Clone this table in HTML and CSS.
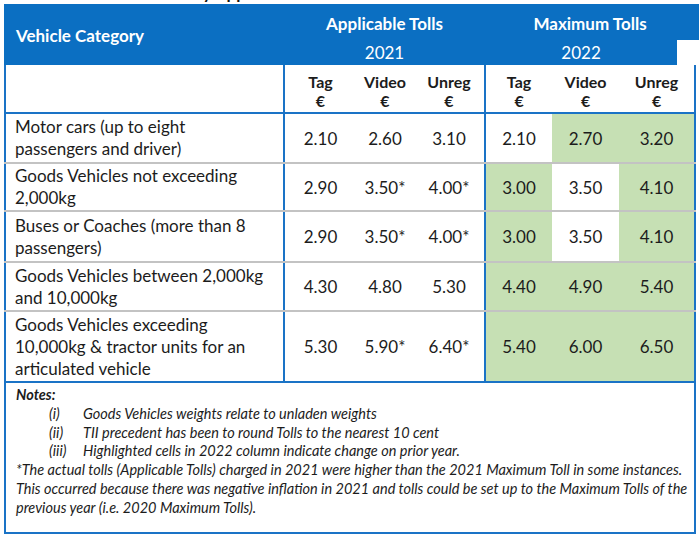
FILE: index.html
```html
<!DOCTYPE html>
<html lang="en">
<head>
<meta charset="utf-8">
<title>Tolls</title>
<link rel="stylesheet" href="styles.css">
</head>
<body>
<div class="title"><span>Toll Summary Applicable and Maximum Tolls</span></div>
<table class="tolls">
  <colgroup>
    <col class="c-cat">
    <col class="c-tag">
    <col class="c-vid">
    <col class="c-unr">
    <col class="c-tag2">
    <col class="c-vid2">
    <col class="c-unr2">
  </colgroup>
  <thead>
    <tr class="h1">
      <th rowspan="2" class="cat-head">Vehicle Category</th>
      <th colspan="3">Applicable Tolls</th>
      <th colspan="3" class="max-head">Maximum Tolls</th>
    </tr>
    <tr class="h2">
      <th colspan="3" class="year">2021</th>
      <th colspan="3" class="year year-max">2022</th>
    </tr>
    <tr class="h3">
      <th class="blank"></th>
      <th class="sep">Tag<br>€</th>
      <th>Video<br>€</th>
      <th>Unreg<br>€</th>
      <th class="sep">Tag<br>€</th>
      <th>Video<br>€</th>
      <th class="last">Unreg<br>€</th>
    </tr>
  </thead>
  <tbody>
    <tr class="r1">
      <td class="cat">Motor cars (up to eight<br>passengers and driver)</td>
      <td class="sep">2.10</td><td>2.60</td><td>3.10</td>
      <td class="sep">2.10</td><td class="hl">2.70</td><td class="hl last">3.20</td>
    </tr>
    <tr class="r2">
      <td class="cat">Goods Vehicles not exceeding<br>2,000kg</td>
      <td class="sep">2.90</td><td>3.50*</td><td>4.00*</td>
      <td class="sep hl">3.00</td><td>3.50</td><td class="hl last">4.10</td>
    </tr>
    <tr class="r3">
      <td class="cat">Buses or Coaches (more than 8<br>passengers)</td>
      <td class="sep">2.90</td><td>3.50*</td><td>4.00*</td>
      <td class="sep hl">3.00</td><td>3.50</td><td class="hl last">4.10</td>
    </tr>
    <tr class="r4">
      <td class="cat">Goods Vehicles between 2,000kg<br>and 10,000kg</td>
      <td class="sep">4.30</td><td>4.80</td><td>5.30</td>
      <td class="sep hl">4.40</td><td class="hl">4.90</td><td class="hl last">5.40</td>
    </tr>
    <tr class="r5">
      <td class="cat">Goods Vehicles exceeding<br>10,000kg &amp; tractor units for an<br>articulated vehicle</td>
      <td class="sep">5.30</td><td>5.90*</td><td>6.40*</td>
      <td class="sep hl">5.40</td><td class="hl">6.00</td><td class="hl last">6.50</td>
    </tr>
  </tbody>
  <tfoot>
    <tr>
      <td colspan="7" class="notes">
        <div class="notes-title">Notes:</div>
        <ol class="notes-list">
          <li><span class="num">(i)</span><span>Goods Vehicles weights relate to unladen weights</span></li>
          <li><span class="num">(ii)</span><span>TII precedent has been to round Tolls to the nearest 10 cent</span></li>
          <li><span class="num">(iii)</span><span>Highlighted cells in 2022 column indicate change on prior year.</span></li>
        </ol>
        <p class="foot">*The actual tolls (Applicable Tolls) charged in 2021 were higher than the 2021 Maximum Toll in some instances.<br>This occurred because there was negative inflation in 2021 and tolls could be set up to the Maximum Tolls of the<br>previous year (i.e. 2020 Maximum Tolls).</p>
      </td>
    </tr>
  </tfoot>
</table>
</body>
</html>
```

FILE: styles.css
```css
html, body {
  margin: 0;
  padding: 0;
  background: #ffffff;
}
body {
  font-family: Lato, "Open Sans", "Liberation Sans", sans-serif;
  color: #1c1c1c;
  width: 700px;
  height: 536px;
  overflow: hidden;
}
.title {
  height: 4px;
  overflow: hidden;
  padding-left: 110px;
}
.title span {
  display: block;
  margin-top: -17px;
  line-height: 20px;
  font-size: 17px;
  font-weight: bold;
  color: #111;
  white-space: nowrap;
}
.tolls {
  border-collapse: collapse;
  table-layout: fixed;
  margin-left: 4px;
  width: 690px;
  font-size: 17px;
}
.c-cat { width: 279px; }
.c-tag { width: 72px; }
.c-vid { width: 58px; }
.c-unr { width: 71px; }
.c-tag2 { width: 67px; }
.c-vid2 { width: 67px; }
.c-unr2 { width: 76px; }

.tolls th, .tolls td {
  padding: 0;
  text-align: center;
  vertical-align: middle;
}
.h1 th, .h2 th {
  background: #0b6fc2;
  color: #ffffff;
  font-weight: bold;
}
.h1 { height: 36px; }
.h1 th { vertical-align: middle; padding-top: 2px; }
.h2 { height: 25px; }
.cat-head {
  text-align: left !important;
  padding-left: 10px !important;
  border-left: 2px solid #0b6fc2;
}
.max-head {
  box-shadow: 4px 0 0 #0b6fc2;
}
.h2 th.year {
  font-weight: normal;
}
.h2 th.year-max {
  background: linear-gradient(to right, #0b6fc2 calc(100% - 18px), #ffffff calc(100% - 18px));
  padding-right: 18px;
}
.h3 { height: 48px; }
.h3 th {
  font-weight: bold;
  font-size: 16px;
  line-height: 19px;
  padding-top: 4px;
  border-bottom: 2px solid #1a73c6;
}
.h3 th.blank {
  border-left: 2px solid #1a73c6;
}
.sep {
  border-left: 2px solid #1a73c6;
}
.last {
  border-right: 2px solid #1a73c6;
}
tbody td {
  border-bottom: 2px solid #c3c3c3;
}
tbody tr.r5 td {
  border-bottom: 2px solid #1a73c6;
}
td.cat {
  text-align: left;
  padding-left: 9px;
  padding-right: 4px;
  line-height: 22px;
  white-space: nowrap;
  border-left: 2px solid #1a73c6;
}
.r1 { height: 50px; }
.r2 { height: 48px; }
.r3 { height: 51px; }
.r4 { height: 49px; }
.r5 { height: 71px; }
td.hl {
  background: #c6e0b4;
}
.notes {
  text-align: left !important;
  vertical-align: top !important;
  border: 2px solid #1a73c6;
  height: 146px;
  padding: 3px 6px 0 10px !important;
  font-style: italic;
  font-size: 14.5px;
  line-height: 18.8px;
  white-space: nowrap;
}
.notes-title {
  font-weight: bold;
}
.notes-list {
  list-style: none;
  margin: 0;
  padding: 0 0 0 33px;
}
.notes-list li {
  display: flex;
}
.notes-list .num {
  width: 34px;
  flex: none;
}
.foot {
  margin: 0;
}
```
